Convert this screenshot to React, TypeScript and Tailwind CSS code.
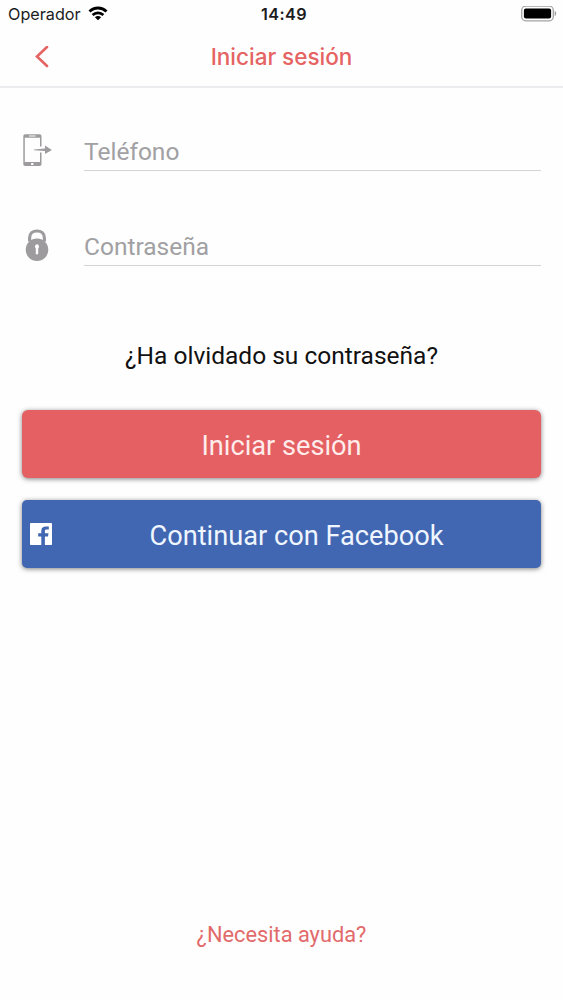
import React from "react";

interface FieldProps {
  icon: React.ReactNode;
  label: string;
  type: string;
}

const WifiIcon = () => (
  <svg className="ml-[7px] h-[15px] w-5" viewBox="0 0 20 15" fill="none" stroke="#000">
    <path d="M1.500 5.500C6.200 .8 13.800 .8 18.500 5.500" strokeWidth="2.900" />
    <path d="M4.600 9C7.600 6.100 12.400 6.100 15.400 9" strokeWidth="2.600" />
    <path d="M10 14.200 6.900 11.200C8.600 9.600 11.400 9.600 13.100 11.200Z" fill="#000" stroke="none" />
  </svg>
);

const BatteryIcon = () => (
  <svg className="h-4 w-9" viewBox="0 0 36 16">
    <rect x="0.700" y="0.200" width="31.600" height="14.600" rx="4" fill="none" stroke="#a3a3a3" strokeWidth="1.300" />
    <rect x="2.900" y="2.400" width="27.200" height="10.200" rx="2" fill="#000" />
    <path d="M33.700 5C35.600 5.600 35.600 9.400 33.700 10Z" fill="#999" />
  </svg>
);

const PhoneIcon = () => (
  <svg className="h-8 w-[31px]" viewBox="0 0 31 32">
    <path
      fillRule="evenodd"
      d="M3 .3H17.800Q19.500 .3 19.500 2V12.500H18V3.800H2.800V28H18V18.500H19.500V30.300Q19.500 32 17.800 32H3Q1.300 32 1.300 30.300V2Q1.300 .3 3 .3ZM7 1.600V2.400H13.500V1.600ZM9.100 29H11.400V31H9.100Z"
      fill="#9d9b9e"
    />
    <path d="M12 15.500 23 14.600V11.500L29.900 15.900 23 19.900V17L12 16.200Z" fill="#9d9b9e" />
  </svg>
);

const LockIcon = () => (
  <svg className="ml-[3px] h-8 w-6" viewBox="0 0 24 32">
    <path d="M4.600 12.500V9C4.600 4.500 7.800 2 12 2S19.400 4.500 19.400 9V12.500" fill="none" stroke="#9d9b9e" strokeWidth="3.200" />
    <circle cx="12" cy="20.700" r="11.300" fill="#9d9b9e" />
    <path d="M12 15.300A2.400 2.400 0 0 1 13.200 19.500V25.300H10.800V19.500A2.400 2.400 0 0 1 12 15.300Z" fill="#fff" />
  </svg>
);

const FacebookIcon = () => (
  <svg className="h-[22px] w-[22px]" viewBox="0 0 22 22">
    <rect width="22" height="22" rx="0.800" fill="#fff" />
    <path
      d="M11.300 22V13.500H8.200V10.200H11.300V7.700C11.300 4.800 13.200 3.500 15.900 3.500L18.800 3.600V6.600H16.700C15.300 6.600 14.900 7.100 14.900 8.100V10.200H18.500L18 13.500H14.900V22Z"
      fill="#4267b2"
    />
  </svg>
);

const Field: React.FC<FieldProps> = ({ icon, label, type }) => (
  <label className="flex h-[37px]">
    <span className="flex w-[62px] shrink-0">{icon}</span>
    <input
      type={type}
      placeholder={label}
      className="min-w-0 flex-1 border-b border-[#d4d4d6] text-[24.500px] outline-none placeholder:text-[#a1a0a3]"
    />
  </label>
);

const App: React.FC = () => {
  return (
    <div className="flex h-[1000px] w-[563px] flex-col bg-[#fefefe] font-['Roboto',sans-serif]">
      <header className="h-[88px] border-b-2 border-[#ececef] font-['Inter',sans-serif]">
        <div className="grid h-7 grid-cols-3 items-center pr-[6px] pl-2 text-[16.200px] text-[#1c1c1e]">
          <div className="flex items-center">
            <span>Operador</span>
            <WifiIcon />
          </div>
          <span className="pl-[3px] text-center font-semibold tracking-[0.400px]">14:49</span>
          <div className="flex justify-end">
            <BatteryIcon />
          </div>
        </div>
        <div className="grid h-[58px] grid-cols-[60px_1fr_60px] items-center text-[#e56363]">
          <button className="flex justify-center pl-6" aria-label="Atrás">
            <svg className="h-[22px] w-[14px]" viewBox="0 0 14 22" fill="none" stroke="currentColor" strokeWidth="2.600" strokeLinecap="round">
              <path d="M12 1 2 10.500 12 20" />
            </svg>
          </button>
          <h1 className="text-center text-[22.500px] font-medium">Iniciar sesión</h1>
        </div>
      </header>

      <main className="flex flex-1 flex-col px-[22px] pt-[46px]">
        <form className="flex flex-col gap-[58px]">
          <Field icon={<PhoneIcon />} label="Teléfono" type="tel" />
          <Field icon={<LockIcon />} label="Contraseña" type="password" />
        </form>

        <a className="mt-[74px] text-center text-[24.500px] leading-8 text-[#111]">¿Ha olvidado su contraseña?</a>

        <div className="mt-[38px] flex flex-col gap-[22px] text-[27.200px] text-white">
          <button className="h-[68px] rounded-md bg-[#e46062] pt-[5px] text-[#ffeceb] shadow-[0_1px_5px_rgba(0,0,0,0.500)]">
            Iniciar sesión
          </button>
          <button className="grid h-[68px] grid-cols-[30px_1fr] items-center rounded-[5px] bg-[#4267b2] pr-[8px] pl-2 text-[#f0f6ff] shadow-[0_1px_5px_rgba(0,0,0,0.500)]">
            <FacebookIcon />
            <span className="pt-[5px]">Continuar con Facebook</span>
          </button>
        </div>

        <a className="mt-auto mb-[49px] text-center text-[21.800px] leading-8 text-[#e26a6b]">¿Necesita ayuda?</a>
      </main>
    </div>
  );
};

export default App;
